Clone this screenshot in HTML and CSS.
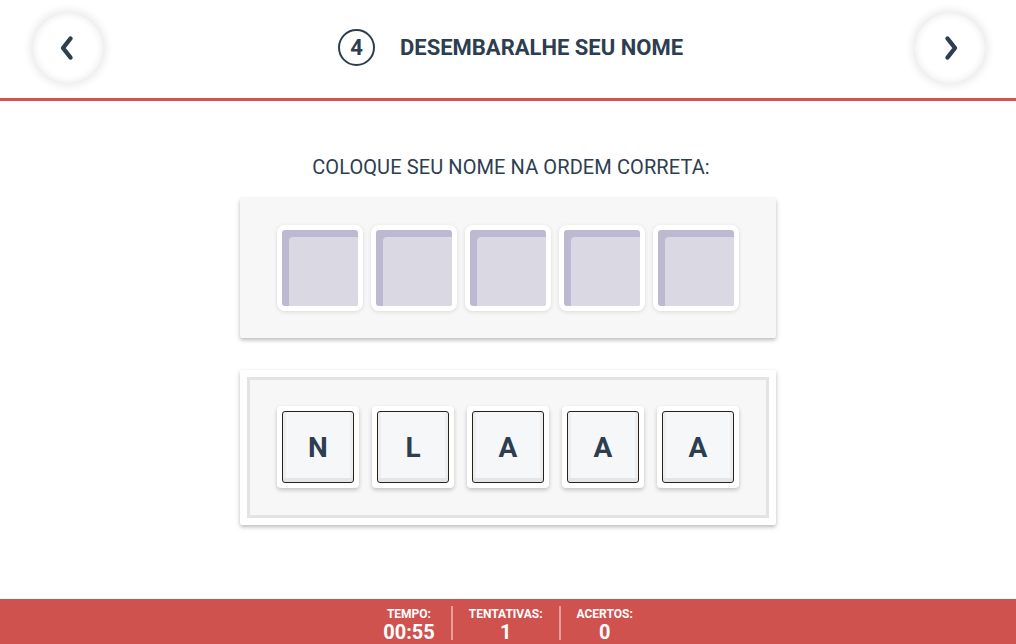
FILE: index.html
```html
<!DOCTYPE html>
<html lang="pt">
<head>
<meta charset="utf-8">
<title>Desembaralhe seu nome</title>
<link rel="stylesheet" href="styles.css">
</head>
<body>
<div class="app">
  <header class="topbar">
    <button class="nav-btn prev" aria-label="Voltar">
      <svg width="16" height="26" viewBox="0 0 16 26"><path d="M11.5 3.5 L4 13 L11.5 22.5" fill="none" stroke="#2c3e50" stroke-width="4.4" stroke-linecap="round" stroke-linejoin="round"/></svg>
    </button>
    <div class="title">
      <span class="step">4</span>
      <h1>DESEMBARALHE SEU NOME</h1>
    </div>
    <button class="nav-btn next" aria-label="Avançar">
      <svg width="16" height="26" viewBox="0 0 16 26"><path d="M4.5 3.5 L12 13 L4.5 22.5" fill="none" stroke="#2c3e50" stroke-width="4.4" stroke-linecap="round" stroke-linejoin="round"/></svg>
    </button>
  </header>

  <main class="content">
    <p class="instruction">COLOQUE SEU NOME NA ORDEM CORRETA:</p>

    <section class="panel slots-panel">
      <div class="slot"><div class="slot-inner"></div></div>
      <div class="slot"><div class="slot-inner"></div></div>
      <div class="slot"><div class="slot-inner"></div></div>
      <div class="slot"><div class="slot-inner"></div></div>
      <div class="slot"><div class="slot-inner"></div></div>
    </section>

    <section class="panel tiles-panel">
      <div class="tiles-inner">
        <div class="tile"><span>N</span></div>
        <div class="tile"><span>L</span></div>
        <div class="tile"><span>A</span></div>
        <div class="tile"><span>A</span></div>
        <div class="tile"><span>A</span></div>
      </div>
    </section>
  </main>

  <footer class="statusbar">
    <div class="stat"><span class="label">TEMPO:</span><span class="value">00:55</span></div>
    <div class="stat"><span class="label">TENTATIVAS:</span><span class="value">1</span></div>
    <div class="stat"><span class="label">ACERTOS:</span><span class="value">0</span></div>
  </footer>
</div>
</body>
</html>
```

FILE: styles.css
```css
* { box-sizing: border-box; }
html, body { margin: 0; padding: 0; }
body {
  font-family: Roboto, "Liberation Sans", Arial, sans-serif;
  color: #2c3e50;
  background: #fff;
}
.app {
  width: 1016px;
  height: 644px;
  display: flex;
  flex-direction: column;
  overflow: hidden;
}
.topbar {
  height: 101px;
  flex: none;
  border-bottom: 3px solid #d4524f;
  display: flex;
  align-items: center;
  justify-content: space-between;
  padding: 0 31px 3px 33px;
}
.nav-btn {
  width: 70px;
  height: 70px;
  border-radius: 50%;
  border: none;
  background: #fff;
  box-shadow: 0 0 8px 3px rgba(0,0,0,0.09), inset 0 0 6px 2px rgba(0,0,0,0.06);
  display: flex;
  align-items: center;
  justify-content: center;
  padding: 0;
  cursor: pointer;
}
.nav-btn.prev svg { margin-left: -3px; }
.nav-btn.next svg { margin-left: 2px; }
.title {
  display: flex;
  align-items: center;
  gap: 25px;
  margin-left: 3px;
}
.step {
  width: 37px;
  height: 37px;
  border: 2px solid #2c3e50;
  border-radius: 50%;
  display: flex;
  align-items: center;
  justify-content: center;
  font-weight: 700;
  font-size: 22px;
}
.title h1 {
  margin: 0;
  font-size: 22px;
  font-weight: 700;
  letter-spacing: 0;
}
.content {
  flex: 1;
  display: flex;
  flex-direction: column;
  align-items: center;
}
.instruction {
  margin: 55px 0 0 6px;
  font-size: 20px;
  line-height: 22px;
  letter-spacing: 0.1px;
}
.panel {
  width: 536px;
  border-radius: 2px;
  box-shadow: 0 2px 4px rgba(0,0,0,0.28);
}
.slots-panel {
  margin-top: 20px;
  height: 140px;
  background: #f7f7f7;
  display: flex;
  justify-content: center;
  align-items: center;
  gap: 8px;
}
.slot {
  width: 86px;
  height: 86px;
  background: #fff;
  border-radius: 8px;
  padding: 5px;
  box-shadow: 0 1px 4px rgba(0,0,0,0.12);
}
.slot-inner {
  width: 100%;
  height: 100%;
  background: #bdb9d1;
  border-radius: 3px;
  padding: 7px 0 0 7px;
}
.slot-inner::after {
  content: "";
  display: block;
  width: 100%;
  height: 100%;
  background: #dad8e3;
  border-radius: 4px 0 3px 0;
}
.tiles-panel {
  margin-top: 32px;
  height: 155px;
  background: #fff;
  padding: 7px;
}
.tiles-inner {
  height: 100%;
  border: 3px solid #e2e3e3;
  background: #f7f7f7;
  display: flex;
  justify-content: center;
  align-items: center;
  gap: 13px;
  padding-bottom: 1px;
}
.tile {
  width: 82px;
  height: 82px;
  background: #fff;
  border-radius: 4px;
  padding: 5px;
  box-shadow: 0 2px 4px rgba(0,0,0,0.22);
}
.tile span {
  display: flex;
  width: 100%;
  height: 100%;
  align-items: center;
  justify-content: center;
  border: 1px solid #2a2119;
  border-radius: 3px;
  background: #f6f7f8;
  box-shadow: inset 0 -4px 0 #e3e6e7, inset 3px 0 0 #eceeef, inset -3px 0 0 #eceeef;
  font-size: 28px;
  font-weight: 700;
  color: #2c3e50;
  padding-top: 1px;
}
.statusbar {
  height: 45px;
  flex: none;
  background: #d0524f;
  color: #fff;
  display: flex;
  justify-content: center;
  align-items: stretch;
  padding: 7px 0 4px;
}
.stat {
  display: flex;
  flex-direction: column;
  align-items: center;
  padding: 0 16px;
  line-height: 1;
}
.stat + .stat { border-left: 2px solid rgba(255,255,255,0.45); }
.stat .label {
  font-size: 12px;
  font-weight: 700;
  margin-top: 2px;
}
.stat .value {
  font-size: 20px;
  font-weight: 700;
  margin-top: 2px;
}
```
